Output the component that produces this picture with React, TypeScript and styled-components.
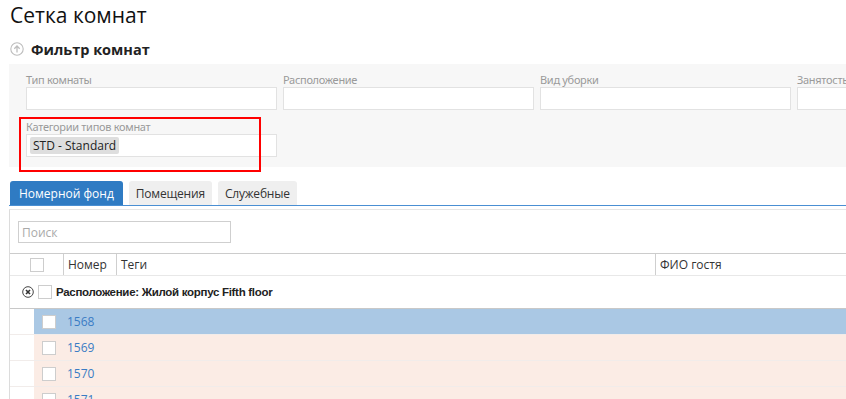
import React from "react";
import styled, { createGlobalStyle } from "styled-components";

const GlobalStyle = createGlobalStyle`
  html, body {
    margin: 0;
    padding: 0;
    background: #fff;
    overflow: hidden;
  }
  body {
    font-family: "Open Sans", "Noto Sans", sans-serif;
    color: #222;
  }
`;

const Page = styled.div`
  width: 846px;
  height: 399px;
  padding-left: 9px;
  box-sizing: border-box;
  overflow: hidden;
`;

const Title = styled.h1`
  margin: 0;
  padding-left: 1px;
  font-size: 21px;
  font-weight: 400;
  line-height: 30px;
  color: #111;
`;

const FilterHeader = styled.div`
  display: flex;
  align-items: center;
  gap: 7px;
  height: 22px;
  margin-top: 8px;
  padding-left: 1px;
  font-size: 14.5px;
  font-weight: 700;
  color: #222;
`;

const FilterPanel = styled.div`
  position: relative;
  background: #f7f7f7;
  padding: 8px 0 10px 17px;
  margin-top: 4px;
  display: grid;
  grid-template-columns: repeat(4, 251px);
  column-gap: 6px;
  row-gap: 9px;
  width: 1100px;
`;

const Field = styled.div`
  display: flex;
  flex-direction: column;
`;

const Label = styled.div`
  font-family: "Noto Sans", "Open Sans", sans-serif;
  font-size: 11px;
  line-height: 15px;
  color: #9a9a9a;
  letter-spacing: -0.3px;
  white-space: nowrap;
`;

const Input = styled.div`
  height: 23px;
  box-sizing: border-box;
  background: #fff;
  border: 1px solid #e2e2e2;
  display: flex;
  align-items: center;
  padding-left: 3px;
`;

const Tag = styled.span`
  background: #dedede;
  border-radius: 2px;
  font-size: 12px;
  line-height: 17px;
  padding: 0 3px;
  color: #222;
`;

const Highlight = styled.div`
  position: absolute;
  left: 10px;
  top: 53px;
  width: 242px;
  height: 55px;
  box-sizing: border-box;
  border: 2px solid #ff0000;
  pointer-events: none;
`;

const TabBar = styled.div`
  display: flex;
  gap: 6px;
  margin-top: 14px;
  padding-left: 1px;
  border-bottom: 1px solid #4a8fd3;
  width: 1100px;
`;

const Tab = styled.div<{ $active?: boolean }>`
  height: 24px;
  display: flex;
  align-items: center;
  padding: 0 ${({ $active }) => ($active ? "9px" : "7px")};
  border-radius: 3px 3px 0 0;
  font-size: 12px;
  letter-spacing: ${({ $active }) => ($active ? "0" : "-0.2px")};
  background: ${({ $active }) => ($active ? "#2f7bc3" : "#efefef")};
  color: ${({ $active }) => ($active ? "#fff" : "#333")};
`;

const Content = styled.div`
  margin-top: 3px;
  border-top: 1px solid #e6e6e6;
  border-left: 1px solid #dcdcdc;
  width: 1100px;
  padding-top: 11px;
`;

const Search = styled.div`
  margin-left: 8px;
  width: 213px;
  height: 22px;
  box-sizing: border-box;
  border: 1px solid #cfcfcf;
  font-size: 12px;
  color: #aaa;
  display: flex;
  align-items: center;
  padding-left: 3px;
`;

const HeaderRow = styled.div`
  margin-top: 10px;
  display: grid;
  grid-template-columns: 53px 53px 539px 1fr;
  height: 23px;
  border-top: 1px solid #cccccc;
  border-bottom: 1px solid #e8e8e8;
  box-sizing: border-box;
`;

const HeadCell = styled.div<{ $center?: boolean }>`
  display: flex;
  align-items: center;
  justify-content: ${({ $center }) => ($center ? "center" : "flex-start")};
  padding-left: ${({ $center }) => ($center ? "0" : "4px")};
  font-size: 12px;
  color: #333;
  & + & {
    border-left: 1px solid #cfcfcf;
  }
`;

const Checkbox = styled.span`
  display: inline-block;
  width: 12px;
  height: 12px;
  border: 1px solid #cdcdcd;
  background: #fff;
  flex-shrink: 0;
`;

const GroupRow = styled.div`
  height: 33px;
  display: flex;
  align-items: center;
  gap: 4px;
  padding-left: 12px;
  box-sizing: border-box;
  border-bottom: 1px solid #c8c8c8;
  color: #222;
`;

const GroupTitle = styled.span`
  font-family: "Liberation Sans", Arial, sans-serif;
  font-size: 11.5px;
  font-weight: 700;
  letter-spacing: -0.3px;
`;

const Row = styled.div`
  height: 26px;
  display: flex;
  border-bottom: 1px solid #f1ecea;
  box-sizing: border-box;
`;

const Indent = styled.div`
  width: 24px;
  flex-shrink: 0;
`;

const RowBody = styled.div<{ $selected?: boolean }>`
  flex: 1;
  display: flex;
  align-items: center;
  gap: 11px;
  padding-left: 8px;
  background: ${({ $selected }) => ($selected ? "#aac8e4" : "#fbece5")};
`;

const RoomNumber = styled.span`
  font-size: 12px;
  color: #3a7cc4;
`;

const CollapseIcon = () => (
  <svg width="14" height="14" viewBox="0 0 14 14">
    <circle cx="7" cy="7" r="6.2" fill="#fff" stroke="#bdbdbd" strokeWidth="1.1" />
    <path d="M7 10.5V4M4.3 6.7L7 4l2.7 2.7" fill="none" stroke="#bdbdbd" strokeWidth="1.3" />
  </svg>
);

const GroupIcon = () => (
  <svg width="12" height="12" viewBox="0 0 12 12">
    <circle cx="6" cy="6" r="5.3" fill="#fff" stroke="#444" strokeWidth="1" />
    <path d="M4 4l4 4M8 4L4 8" stroke="#333" strokeWidth="1.6" />
  </svg>
);

const rooms = [
  { num: "1568", selected: true },
  { num: "1569" },
  { num: "1570" },
  { num: "1571" },
];

export default function App() {
  return (
    <Page>
      <GlobalStyle />
      <Title>Сетка комнат</Title>
      <FilterHeader>
        <CollapseIcon />
        Фильтр комнат
      </FilterHeader>
      <FilterPanel>
        <Field>
          <Label>Тип комнаты</Label>
          <Input />
        </Field>
        <Field>
          <Label>Расположение</Label>
          <Input />
        </Field>
        <Field>
          <Label>Вид уборки</Label>
          <Input />
        </Field>
        <Field>
          <Label>Занятость</Label>
          <Input />
        </Field>
        <Field>
          <Label>Категории типов комнат</Label>
          <Input>
            <Tag>STD - Standard</Tag>
          </Input>
        </Field>
        <Highlight />
      </FilterPanel>
      <TabBar>
        <Tab $active>Номерной фонд</Tab>
        <Tab>Помещения</Tab>
        <Tab>Служебные</Tab>
      </TabBar>
      <Content>
        <Search>Поиск</Search>
        <HeaderRow>
          <HeadCell $center>
            <Checkbox />
          </HeadCell>
          <HeadCell>Номер</HeadCell>
          <HeadCell>Теги</HeadCell>
          <HeadCell>ФИО гостя</HeadCell>
        </HeaderRow>
        <GroupRow>
          <GroupIcon />
          <Checkbox />
          <GroupTitle>Расположение: Жилой корпус Fifth floor</GroupTitle>
        </GroupRow>
        {rooms.map((r) => (
          <Row key={r.num}>
            <Indent />
            <RowBody $selected={r.selected}>
              <Checkbox />
              <RoomNumber>{r.num}</RoomNumber>
            </RowBody>
          </Row>
        ))}
      </Content>
    </Page>
  );
}
